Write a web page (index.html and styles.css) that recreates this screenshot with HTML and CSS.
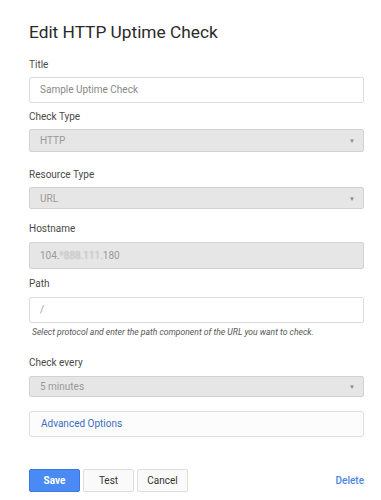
FILE: index.html
```html
<!DOCTYPE html>
<html>
<head>
<meta charset="utf-8">
<link rel="stylesheet" href="styles.css">
</head>
<body>
<div class="page">
  <h1 class="title">Edit HTTP Uptime Check</h1>

  <div class="field f-title">
    <div class="label">Title</div>
    <div class="input">Sample Uptime Check</div>
  </div>

  <div class="field f-type">
    <div class="label">Check Type</div>
    <div class="select">HTTP<span class="caret">▼</span></div>
  </div>

  <div class="field f-res">
    <div class="label">Resource Type</div>
    <div class="select">URL<span class="caret">▼</span></div>
  </div>

  <div class="field f-host">
    <div class="label">Hostname</div>
    <div class="input disabled">104.<span class="blur">*888.111.</span>180</div>
  </div>

  <div class="field f-path">
    <div class="label">Path</div>
    <div class="input path">/</div>
    <div class="help">Select protocol and enter the path component of the URL you want to check.</div>
  </div>

  <div class="field f-every">
    <div class="label">Check every</div>
    <div class="select">5 minutes<span class="caret">▼</span></div>
  </div>

  <div class="advanced">Advanced Options</div>

  <div class="actions">
    <button class="btn primary">Save</button>
    <button class="btn">Test</button>
    <button class="btn">Cancel</button>
    <span class="spacer"></span>
    <a class="delete">Delete</a>
  </div>
</div>
</body>
</html>
```

FILE: styles.css
```css
html, body {
  margin: 0;
  padding: 0;
  background: #fff;
}
body {
  font-family: Roboto, "Liberation Sans", sans-serif;
  color: #333;
}
.page {
  width: 335px;
  padding: 0 0 0 29px;
}
.title {
  margin: 0;
  padding-top: 21px;
  height: 23px;
  font-size: 17.3px;
  font-weight: 400;
  line-height: 23px;
  color: #2a2a2a;
}
.field {
  display: flex;
  flex-direction: column;
}
.label {
  font-size: 10px;
  line-height: 12px;
  color: #4a4a4a;
  height: 12px;
}
.f-title { margin-top: 15px; }
.f-title .label { margin-bottom: 6px; }
.f-type { margin-top: 8px; }
.f-type .label { margin-bottom: 6px; }
.f-res { margin-top: 17px; }
.f-res .label { margin-bottom: 6px; }
.f-host { margin-top: 14px; }
.f-host .label { margin-bottom: 7px; }
.f-path { margin-top: 9px; }
.f-path .label { margin-bottom: 7px; }
.f-every { margin-top: 20px; }
.f-every .label { margin-bottom: 7px; }

.input, .select {
  box-sizing: border-box;
  height: 26px;
  border: 1px solid #dcdcdc;
  border-radius: 2px;
  padding: 0 10px;
  font-size: 10px;
  line-height: 24px;
  color: #888;
  background: #fff;
}
.select, .disabled {
  background: #e6e6e6;
  border-color: #d2d2d2;
  color: #9a9a9a;
}
.select {
  height: 23px;
  line-height: 21px;
  display: flex;
  justify-content: space-between;
  align-items: center;
}
.f-res .select { height: 22px; }
.f-every .select { height: 21px; }
.disabled { height: 27px; line-height: 25px; }
.caret {
  font-size: 6px;
  color: #888;
  margin-right: -2px;
}
.blur {
  color: #cfcfcf;
  text-shadow: 0 0 1.5px #bbb;
}
.path { color: #999; }
.help {
  height: 10px;
  font-size: 8.6px;
  font-style: italic;
  color: #555;
  margin-top: 4px;
  padding-left: 3px;
  line-height: 10px;
  white-space: nowrap;
}
.advanced {
  box-sizing: border-box;
  margin-top: 14px;
  height: 26px;
  border: 1px solid #e0e0e0;
  border-radius: 3px;
  padding: 0 11px;
  font-size: 10px;
  line-height: 24px;
  color: #3b6cc4;
  background: #fcfcfc;
}
.actions {
  margin-top: 32px;
  display: flex;
  align-items: center;
  gap: 3px;
}
.btn {
  box-sizing: border-box;
  width: 51px;
  height: 23px;
  border: 1px solid #dedede;
  border-radius: 2px;
  background: #fafafa;
  font-family: Roboto, "Liberation Sans", sans-serif;
  font-size: 10px;
  color: #333;
  padding: 0;
  margin: 0;
}
.btn.primary {
  background: #4a8af4;
  border-color: #3b78e0;
  color: #fff;
  font-weight: 700;
}
.spacer { flex: 1; }
.delete {
  font-size: 10px;
  color: #4a86e0;
  font-weight: 500;
}
```
